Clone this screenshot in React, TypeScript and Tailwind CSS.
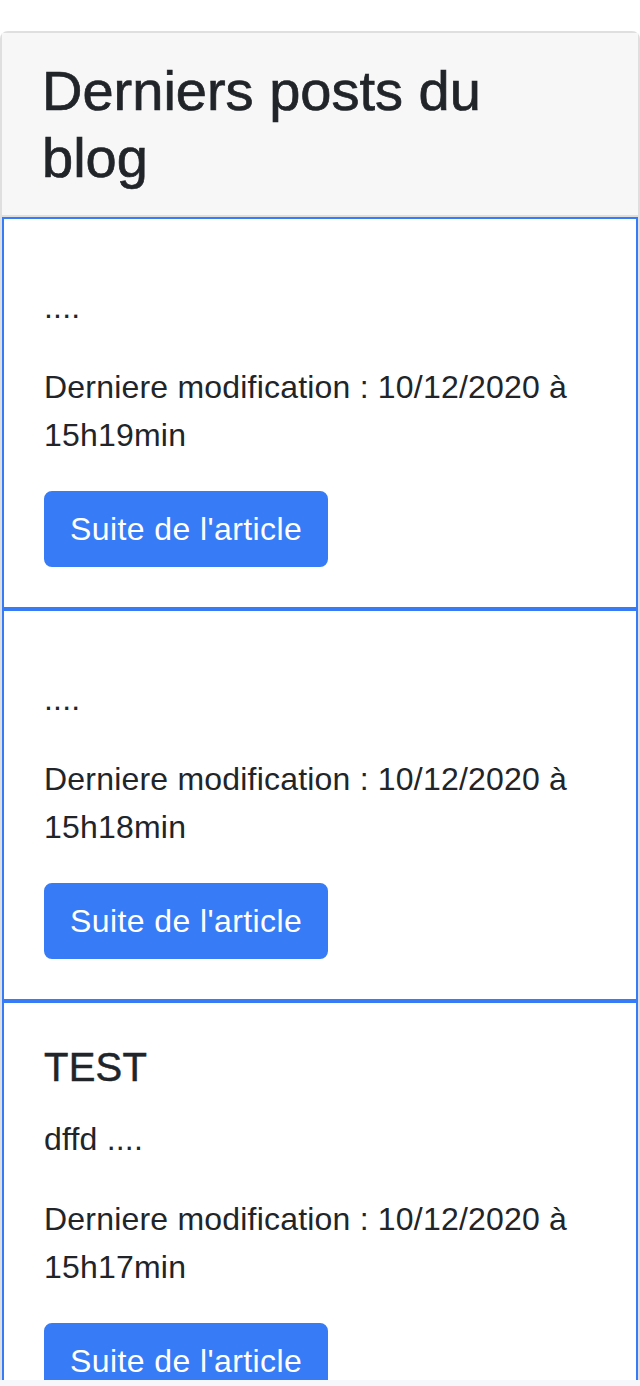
const posts = [
  { title: '', excerpt: '....', updated: '10/12/2020 à 15h19min' },
  { title: '', excerpt: '....', updated: '10/12/2020 à 15h18min' },
  { title: 'TEST', excerpt: 'dffd ....', updated: '10/12/2020 à 15h17min' },
]

function PostItem({ post }: { post: (typeof posts)[number] }) {
  return (
    <div className="border-2 border-[#387bf6] p-[40px]">
      <h5 className="mb-[24px] text-[40px] leading-[48px] [-webkit-text-stroke:0.5px_#212529]">
        {post.title}
      </h5>
      <p className="mb-[32px]">{post.excerpt}</p>
      <p className="mb-[32px]">{`Derniere modification : ${post.updated}`}</p>
      <a
        href="#"
        className="inline-block rounded-[8px] border-2 border-[#387bf6] bg-[#387bf6] px-[24px] py-[12px] tracking-[0.4px] text-white"
      >
        Suite de l'article
      </a>
    </div>
  )
}

export default function App() {
  return (
    <div className="min-h-[1386px] bg-white pt-[31px] font-['Liberation_Sans',Arial,sans-serif] text-[32px] leading-[48px] tracking-[0.2px] text-[#212529]">
      <div className="rounded-t-[8px] border-2 border-b-0 border-[#dfdfdf]">
        <div className="border-b-2 border-[#dfdfdf] bg-[#f7f7f7] px-[40px] py-[24px]">
          <h3 className="text-[56px] leading-[67px] tracking-normal [-webkit-text-stroke:0.7px_#212529]">
            Derniers posts du blog
          </h3>
        </div>
        {posts.map((post, i) => (
          <PostItem key={i} post={post} />
        ))}
      </div>
      <div className="fixed inset-x-0 bottom-0 h-[6px] bg-[#f5f7fb]" />
    </div>
  )
}
